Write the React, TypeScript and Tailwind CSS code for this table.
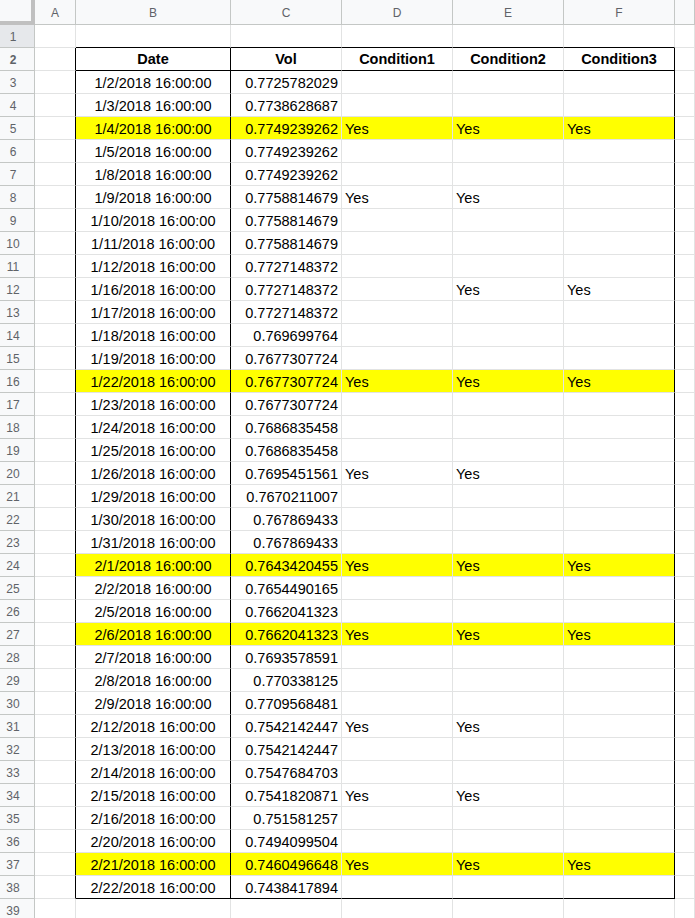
const rows: [string, string, string, string, string, boolean][] = [
  ['1/2/2018 16:00:00', '0.7725782029', '', '', '', false],
  ['1/3/2018 16:00:00', '0.7738628687', '', '', '', false],
  ['1/4/2018 16:00:00', '0.7749239262', 'Yes', 'Yes', 'Yes', true],
  ['1/5/2018 16:00:00', '0.7749239262', '', '', '', false],
  ['1/8/2018 16:00:00', '0.7749239262', '', '', '', false],
  ['1/9/2018 16:00:00', '0.7758814679', 'Yes', 'Yes', '', false],
  ['1/10/2018 16:00:00', '0.7758814679', '', '', '', false],
  ['1/11/2018 16:00:00', '0.7758814679', '', '', '', false],
  ['1/12/2018 16:00:00', '0.7727148372', '', '', '', false],
  ['1/16/2018 16:00:00', '0.7727148372', '', 'Yes', 'Yes', false],
  ['1/17/2018 16:00:00', '0.7727148372', '', '', '', false],
  ['1/18/2018 16:00:00', '0.769699764', '', '', '', false],
  ['1/19/2018 16:00:00', '0.7677307724', '', '', '', false],
  ['1/22/2018 16:00:00', '0.7677307724', 'Yes', 'Yes', 'Yes', true],
  ['1/23/2018 16:00:00', '0.7677307724', '', '', '', false],
  ['1/24/2018 16:00:00', '0.7686835458', '', '', '', false],
  ['1/25/2018 16:00:00', '0.7686835458', '', '', '', false],
  ['1/26/2018 16:00:00', '0.7695451561', 'Yes', 'Yes', '', false],
  ['1/29/2018 16:00:00', '0.7670211007', '', '', '', false],
  ['1/30/2018 16:00:00', '0.767869433', '', '', '', false],
  ['1/31/2018 16:00:00', '0.767869433', '', '', '', false],
  ['2/1/2018 16:00:00', '0.7643420455', 'Yes', 'Yes', 'Yes', true],
  ['2/2/2018 16:00:00', '0.7654490165', '', '', '', false],
  ['2/5/2018 16:00:00', '0.7662041323', '', '', '', false],
  ['2/6/2018 16:00:00', '0.7662041323', 'Yes', 'Yes', 'Yes', true],
  ['2/7/2018 16:00:00', '0.7693578591', '', '', '', false],
  ['2/8/2018 16:00:00', '0.770338125', '', '', '', false],
  ['2/9/2018 16:00:00', '0.7709568481', '', '', '', false],
  ['2/12/2018 16:00:00', '0.7542142447', 'Yes', 'Yes', '', false],
  ['2/13/2018 16:00:00', '0.7542142447', '', '', '', false],
  ['2/14/2018 16:00:00', '0.7547684703', '', '', '', false],
  ['2/15/2018 16:00:00', '0.7541820871', 'Yes', 'Yes', '', false],
  ['2/16/2018 16:00:00', '0.751581257', '', '', '', false],
  ['2/20/2018 16:00:00', '0.7494099504', '', '', '', false],
  ['2/21/2018 16:00:00', '0.7460496648', 'Yes', 'Yes', 'Yes', true],
  ['2/22/2018 16:00:00', '0.7438417894', '', '', '', false],
];

const cols = ['A', 'B', 'C', 'D', 'E', 'F', ''];
const grid = 'grid h-[23px] grid-cols-[35px_41px_155px_111px_111px_111px_111px_1fr] leading-[17px]';

function RowNum({ n, dark }: { n: number; dark?: boolean }) {
  return (
    <div
      className={`flex items-center border-b border-r border-[#c4c7c5] pl-[5px] pt-[3px] text-[12px] text-[#5f6368] ${
        dark ? 'bg-[#e6e8eb]' : 'bg-[#f8f9fa]'
      }`}
    >
      <span className="w-[16px] text-center">{n}</span>
    </div>
  );
}

export default function App() {
  const last = rows.length - 1;
  return (
    <div className="h-[918px] w-[695px] overflow-hidden bg-white text-[14.5px] text-black [font-family:'Liberation_Sans',Arial,sans-serif]">
      {/* column header */}
      <div className="grid h-[25px] grid-cols-[35px_41px_155px_111px_111px_111px_111px_1fr] leading-[17px]">
        <div className="border-b-[4px] border-r-[4px] border-[#c0c0c0] bg-[#f8f9fa]" />
        {cols.map((c, i) => (
          <div
            key={i}
            className="flex items-center justify-center border-b border-r border-[#c4c7c5] bg-[#f8f9fa] pt-[2px] text-[12px] text-[#5f6368]"
          >
            {c}
          </div>
        ))}
      </div>

      {/* row 1 */}
      <div className={grid}>
        <RowNum n={1} dark />
        <div className="border-b border-r border-[#e2e3e3]" />
        <div className="border-b border-r border-b-black border-r-[#e2e3e3]" />
        <div className="border-b border-r border-b-black border-r-[#e2e3e3]" />
        <div className="border-b border-r border-b-black border-r-[#e2e3e3]" />
        <div className="border-b border-r border-b-black border-r-[#e2e3e3]" />
        <div className="border-b border-r border-b-black border-r-[#e2e3e3]" />
        <div className="border-b border-r border-[#e2e3e3]" />
      </div>

      {/* row 2: headers */}
      <div className={`${grid} font-bold`}>
        <RowNum n={2} />
        <div className="border-b border-r border-b-[#e2e3e3] border-r-black" />
        <div className="flex items-center justify-center border-b border-r border-black pt-[1px]">Date</div>
        <div className="flex items-center justify-center border-b border-r border-b-black border-r-[#e2e3e3] pt-[1px]">Vol</div>
        <div className="flex items-center justify-center border-b border-r border-b-black border-r-[#e2e3e3] pt-[1px]">Condition1</div>
        <div className="flex items-center justify-center border-b border-r border-b-black border-r-[#e2e3e3] pt-[1px]">Condition2</div>
        <div className="flex items-center justify-center border-b border-r border-black pt-[1px]">Condition3</div>
        <div className="border-b border-r border-[#e2e3e3]" />
      </div>

      {rows.map(([date, vol, c1, c2, c3, hl], i) => {
        const bottom = i === last ? 'border-b-black' : 'border-b-[#e2e3e3]';
        const fill = hl ? 'bg-[#ffff00]' : 'bg-white';
        return (
          <div key={i} className={grid}>
            <RowNum n={i + 3} />
            <div className="border-b border-r border-b-[#e2e3e3] border-r-black" />
            <div className={`flex items-center justify-center border-b border-r border-r-black pt-[3px] ${bottom} ${fill}`}>
              {date}
            </div>
            <div className={`flex items-center justify-end border-b border-r border-r-[#e2e3e3] pr-[3px] pt-[3px] ${bottom} ${fill}`}>
              {vol}
            </div>
            <div className={`flex items-center border-b border-r border-r-[#e2e3e3] pl-[3px] pt-[3px] ${bottom} ${fill}`}>{c1}</div>
            <div className={`flex items-center border-b border-r border-r-[#e2e3e3] pl-[3px] pt-[3px] ${bottom} ${fill}`}>{c2}</div>
            <div className={`flex items-center border-b border-r border-r-black pl-[3px] pt-[3px] ${bottom} ${fill}`}>{c3}</div>
            <div className="border-b border-r border-[#e2e3e3]" />
          </div>
        );
      })}

      {/* row 39 */}
      <div className={grid}>
        <RowNum n={39} />
        <div className="border-b border-r border-[#e2e3e3]" />
        <div className="border-b border-r border-[#e2e3e3]" />
        <div className="border-b border-r border-[#e2e3e3]" />
        <div className="border-b border-r border-[#e2e3e3]" />
        <div className="border-b border-r border-[#e2e3e3]" />
        <div className="border-b border-r border-[#e2e3e3]" />
        <div className="border-b border-r border-[#e2e3e3]" />
      </div>
    </div>
  );
}
